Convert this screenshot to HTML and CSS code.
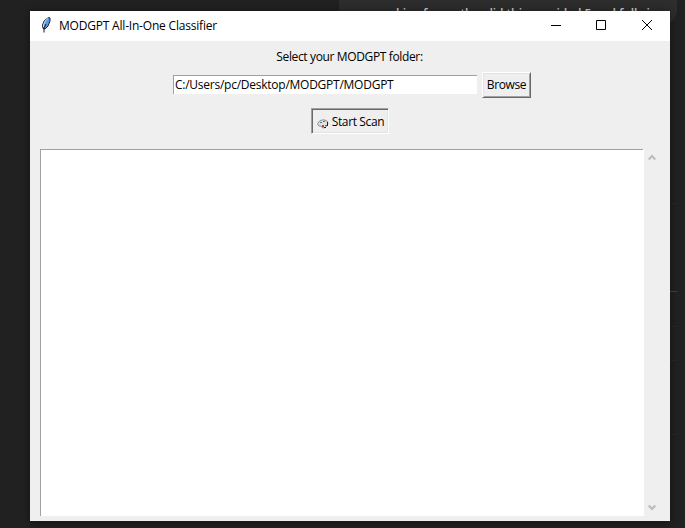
FILE: index.html
```html
<!DOCTYPE html>
<html lang="en">
<head>
<meta charset="utf-8">
<title>MODGPT All-In-One Classifier</title>
<link rel="stylesheet" href="styles.css">
</head>
<body>
<div class="bubble">king for on the &nbsp;did this provided 5 and fully in</div>
<i class="rule r1"></i><i class="rule r2"></i><i class="rule r3"></i><i class="rule r4"></i><i class="rule r5"></i>
<main class="window">
  <header class="titlebar">
    <svg class="feather" width="10" height="16" viewBox="0 0 10 16">
      <path d="M7.500 .5 9 1V4L7 9 4 12 2 11.500 1.500 8 3 4Z" fill="#5c9ae0" stroke="#1c2531"/>
      <path d="M7 1.500 4.500 3.500 2.500 8V10" stroke="#d5e3f0" fill="none"/>
      <path d="M5 7 3 11V15.500" stroke="#101820" fill="none"/>
    </svg>
    <span class="title">MODGPT All-In-One Classifier</span>
    <svg class="controls" width="104" height="12" viewBox="0 0 104 12" fill="none" stroke="#000">
      <path d="M1 6.500H11M46.500 1.500H55.500V10.500H46.500Z"/>
      <path d="M92 1 102 11M102 1 92 11"/>
    </svg>
  </header>
  <div class="label"><span>Select your MODGPT folder:</span></div>
  <div class="row">
    <div class="entry"><span>C:/Users/pc/Desktop/MODGPT/MODGPT</span></div>
    <div class="button browse"><span>Browse</span></div>
  </div>
  <div class="button scan">
    <svg width="12" height="10" viewBox="0 0 12 10">
      <path d="M1 4 3 1.500 7 .8 10 2 11 4 10 7 7 9 5 8.500 4 7H2L.8 5.500Z" fill="#e4e2df" stroke="#777" stroke-width=".8"/>
      <path d="M3 3h2v1H3zM8 6h2v1H8z" fill="#387b9b"/>
      <path d="M6 2h2v1H6zM5 6h2v2H5z" fill="#a05248"/>
      <path d="M10 3h1v4h-1zM7 8h2v1H7z" fill="#202020"/>
    </svg>
    <span>Start Scan</span>
  </div>
  <div class="output">
    <div class="log"></div>
    <div class="scrollbar">
      <svg width="8" height="7" viewBox="0 0 8 7"><path d="M.7 5.500 4 2 7.300 5.500" fill="none" stroke="#bcbcbc" stroke-width="2.200"/></svg>
      <svg width="8" height="7" viewBox="0 0 8 7"><path d="M.7 1.500 4 5 7.300 1.500" fill="none" stroke="#bcbcbc" stroke-width="2.200"/></svg>
    </div>
  </div>
</main>
</body>
</html>
```
FILE: styles.css
```css
* { box-sizing: border-box; }
body {
  margin: 0;
  width: 685px;
  height: 528px;
  padding: 11px 15px 7px 30px;
  overflow: hidden;
  position: relative;
  background: #212121;
  color: #000;
  font: 12px/16px "Open Sans", "Noto Sans", sans-serif;
  white-space: nowrap;
}
.bubble {
  position: absolute;
  left: 339px;
  top: -20px;
  width: 338px;
  height: 47px;
  padding: 26px 0 0 57px;
  border-radius: 18px;
  background: #2d2d2d;
  color: #d0d0d0;
  font-weight: 600;
  letter-spacing: -.1px;
}
.rule { position: absolute; left: 670px; width: 7px; height: 1px; background: #292929; }
.r1 { top: 203px; }
.r2 { top: 291px; background: #444; }
.r3 { top: 326px; }
.r4 { top: 360px; }
.r5 { top: 434px; }
.window {
  position: relative;
  width: 640px;
  height: 510px;
  background: #efefef;
  box-shadow: 0 1px 9px rgba(0, 0, 0, .45);
}
.titlebar {
  display: flex;
  height: 30px;
  padding: 0 16px 0 11px;
  align-items: center;
  background: #fff;
}
.feather { margin-top: -3px; }
.title { margin-left: 8px; letter-spacing: -.2px; }
.controls { margin-left: auto; margin-top: -2px; }
.label { height: 31px; padding: 8px 1px 0 0; text-align: center; letter-spacing: -.36px; }
.row { display: flex; height: 26px; margin-left: 143px; align-items: flex-start; }
.entry {
  width: 304px;
  height: 19px;
  margin: 3px 5px 0 0;
  padding: 1px 0 0 1px;
  border-left: 1px solid #a0a0a0;
  border-top: 1px solid #a0a0a0;
  background: #fff;
  letter-spacing: -.25px;
}
.button {
  display: flex;
  height: 26px;
  align-items: center;
  justify-content: center;
  border: 1px solid;
  letter-spacing: -.36px;
}
.browse {
  width: 49px;
  border-color: #fff #696969 #696969 #fff;
  box-shadow: inset 1px 1px #e3e3e3, inset -1px -1px #a0a0a0;
}
.scan {
  width: 78px;
  margin: 10px 0 0 281px;
  padding: 2px 0 0 1px;
  border-color: #a0a0a0 #fff #fff #a0a0a0;
  box-shadow: inset 1px 1px #696969, inset -1px -1px #e3e3e3;
}
.scan svg { margin: 3px 3px 0 0; }
.output { display: flex; margin: 15px 0 0 10px; height: 367px; }
.log {
  width: 604px;
  background: linear-gradient(#a0a0a0, #a0a0a0) 0 0 / 602px 1px no-repeat, #fff;
  border-left: 1px solid #a0a0a0;
}
.scrollbar {
  display: flex;
  width: 16px;
  flex-direction: column;
  justify-content: space-between;
  align-items: center;
  padding: 5px 1px 5px 0;
}
```
